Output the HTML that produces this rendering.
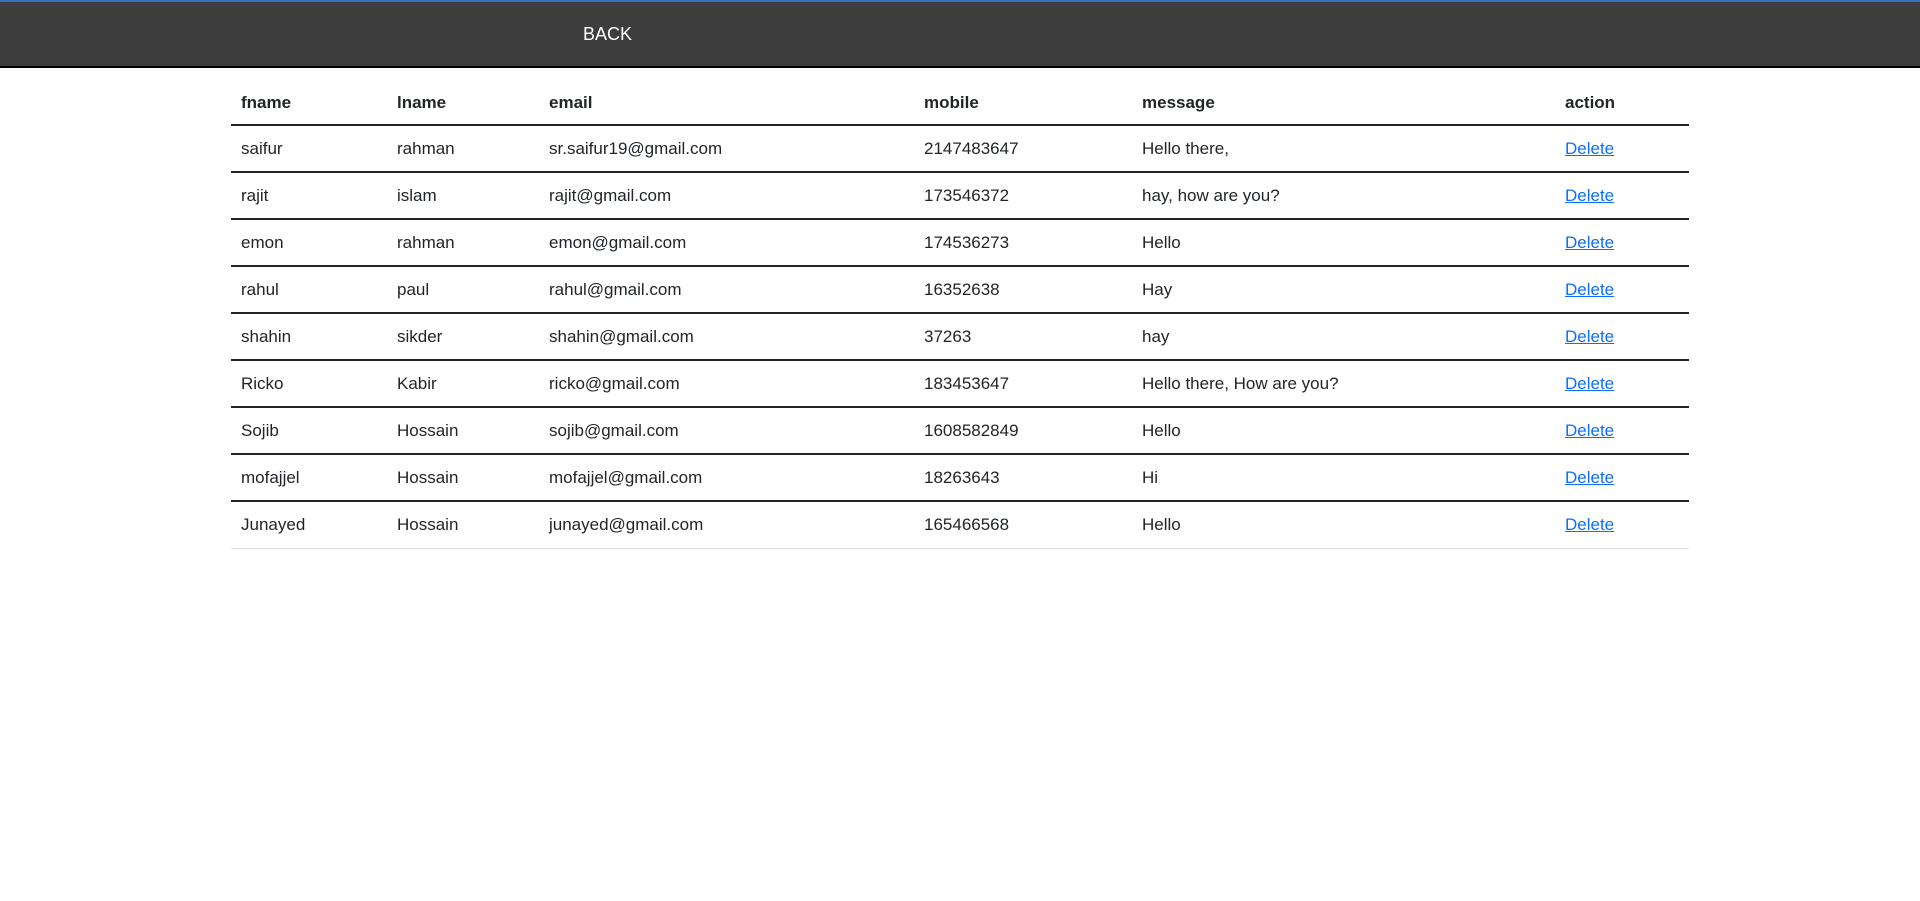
<!DOCTYPE html>
<html><head><style>
body{margin:0;background:#fff;font-family:"Liberation Sans",sans-serif;color:#212529;}
.top{height:2px;background:#3a6fc0;}
.nav{height:64px;background:#3d3d3d;border-bottom:2px solid #000;position:relative;}
.nav span{position:absolute;left:583px;top:22px;color:#fff;font-size:18px;}
table{position:absolute;left:231px;top:68px;width:1458px;border-collapse:collapse;font-size:17px;table-layout:fixed;}
th,td{text-align:left;padding:0 0 0 10px;height:45px;border-bottom:2px solid #212529;line-height:20px;}
th{font-weight:bold;height:45px;padding-bottom:11px;vertical-align:bottom;}
tr:last-child td{border-bottom:1px solid #dee2e6;height:46px;}
a{color:#0d6efd;text-decoration:underline;}
</style></head><body>
<div class="top"></div>
<div class="nav"><span>BACK</span></div>
<table>
<colgroup><col style="width:156px"><col style="width:152px"><col style="width:375px"><col style="width:218px"><col style="width:423px"><col></colgroup>
<tr><th>fname</th><th>lname</th><th>email</th><th>mobile</th><th>message</th><th>action</th></tr>
<tr><td>saifur</td><td>rahman</td><td>sr.saifur19@gmail.com</td><td>2147483647</td><td>Hello there,</td><td><a>Delete</a></td></tr>
<tr><td>rajit</td><td>islam</td><td>rajit@gmail.com</td><td>173546372</td><td>hay, how are you?</td><td><a>Delete</a></td></tr>
<tr><td>emon</td><td>rahman</td><td>emon@gmail.com</td><td>174536273</td><td>Hello</td><td><a>Delete</a></td></tr>
<tr><td>rahul</td><td>paul</td><td>rahul@gmail.com</td><td>16352638</td><td>Hay</td><td><a>Delete</a></td></tr>
<tr><td>shahin</td><td>sikder</td><td>shahin@gmail.com</td><td>37263</td><td>hay</td><td><a>Delete</a></td></tr>
<tr><td>Ricko</td><td>Kabir</td><td>ricko@gmail.com</td><td>183453647</td><td>Hello there, How are you?</td><td><a>Delete</a></td></tr>
<tr><td>Sojib</td><td>Hossain</td><td>sojib@gmail.com</td><td>1608582849</td><td>Hello</td><td><a>Delete</a></td></tr>
<tr><td>mofajjel</td><td>Hossain</td><td>mofajjel@gmail.com</td><td>18263643</td><td>Hi</td><td><a>Delete</a></td></tr>
<tr><td>Junayed</td><td>Hossain</td><td>junayed@gmail.com</td><td>165466568</td><td>Hello</td><td><a>Delete</a></td></tr>
</table>
</body></html>
